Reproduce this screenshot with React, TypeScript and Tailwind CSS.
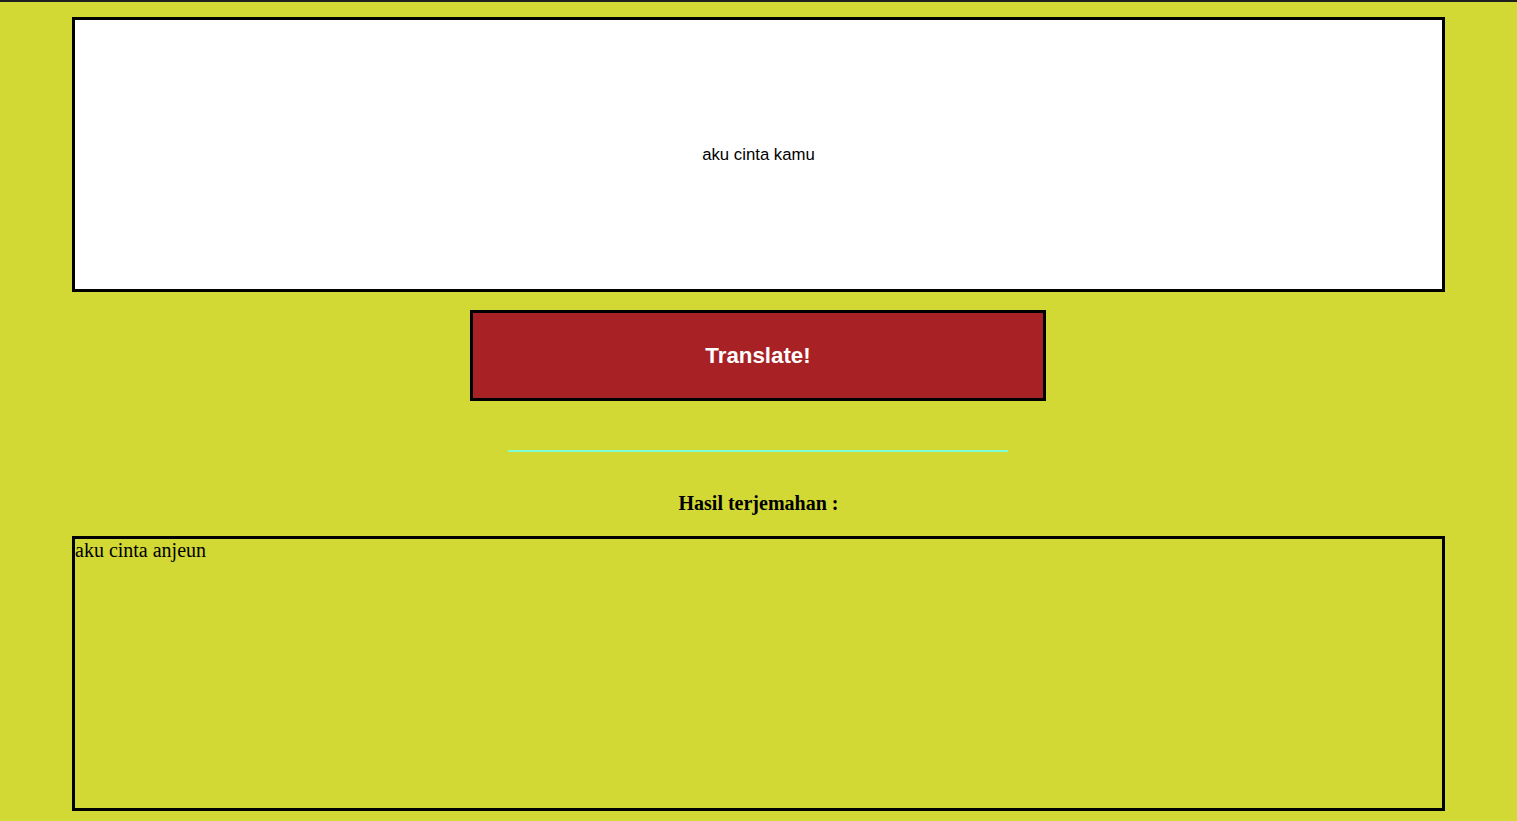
export default function App() {
  return (
    <div className="min-h-[821px] bg-[#d3d934] flex flex-col">
      <div className="h-[2px] bg-[#1f1f1f]" />
      <div className="mx-[72px] mt-[15px] h-[275px] border-[3px] border-black bg-white flex items-center justify-center">
        <span className="font-['Liberation_Sans',Arial,sans-serif] text-[16.75px] text-black">aku cinta kamu</span>
      </div>
      <div className="flex justify-center pr-[1px] mt-[18px]">
        <button className="w-[576px] h-[91px] border-[3px] border-black bg-[#a82225] text-white font-bold text-[22.3px] font-['Liberation_Sans',Arial,sans-serif]">
          Translate!
        </button>
      </div>
      <div className="flex justify-center pr-[1px] mt-[49px]">
        <div className="w-[500px] h-[2px] bg-[#7fffd4]" />
      </div>
      <h3 className="text-center mt-[40px] font-bold text-[20px] leading-[23px] font-['Liberation_Serif','Times_New_Roman',serif] text-black">
        Hasil terjemahan :
      </h3>
      <div className="mx-[72px] mt-[21px] h-[275px] border-[3px] border-black font-['Liberation_Serif','Times_New_Roman',serif] text-[20px] leading-[23px] text-black">
        aku cinta anjeun
      </div>
    </div>
  );
}
